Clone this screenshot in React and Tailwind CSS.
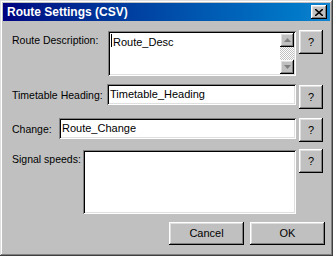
import React from 'react';

const raised =
  'bg-[#c0c0c0] shadow-[inset_-1px_-1px_#000,inset_1px_1px_#fff,inset_-2px_-2px_#808080,inset_2px_2px_#dfdfdf]';
const sunken =
  'bg-white shadow-[inset_1px_1px_#808080,inset_-1px_-1px_#fff,inset_2px_2px_#000,inset_-2px_-2px_#dfdfdf]';

function HelpButton({ className = '' }) {
  return (
    <div className={`w-[24px] h-[24px] shrink-0 flex items-center justify-center text-[11px] text-black ${raised} ${className}`}>
      ?
    </div>
  );
}

function Arrow({ up }) {
  return (
    <div className={`w-[14px] h-[14px] flex items-center justify-center ${raised}`}>
      <svg width="7" height="4" viewBox="0 0 7 4">
        {up ? (
          <path d="M3.5 0 L7 4 L0 4 Z" fill="#808080" />
        ) : (
          <path d="M0 0 L7 0 L3.5 4 Z" fill="#808080" />
        )}
      </svg>
    </div>
  );
}

function Field({ value }) {
  return (
    <div className={`flex-1 h-[21px] flex items-center pl-[3px] text-[11px] text-black ${sunken}`}>
      {value}
    </div>
  );
}

export default function App() {
  return (
    <div
      className="w-[333px] h-[256px] bg-[#c0c0c0] p-[2px] flex flex-col shadow-[inset_-1px_-1px_#404040,inset_1px_1px_#dfdfdf,inset_-2px_-2px_#808080,inset_2px_2px_#fff] overflow-hidden"
      style={{ fontFamily: '"Liberation Sans", Arial, sans-serif' }}
    >
      <div className="h-[18px] mx-[1px] mt-[1px] bg-gradient-to-r from-[#000080] to-[#1084d0] flex items-center justify-between pl-[4px] pr-[3px]">
        <span className="text-white font-bold text-[12px] leading-none">Route Settings (CSV)</span>
        <div className={`w-[16px] h-[14px] flex items-center justify-center ${raised}`}>
          <svg width="8" height="7" viewBox="0 0 8 7">
            <path d="M0 0 L8 7 M8 0 L0 7" stroke="#000" strokeWidth="1.6" />
          </svg>
        </div>
      </div>

      <div className="flex flex-col pl-[10px] pr-[8px] pt-[10px] text-[10.5px] text-black">
        {/* Route Description */}
        <div className="flex items-start">
          <span className="w-[96px] pt-[2px] shrink-0 whitespace-nowrap">Route Description:</span>
          <div className={`flex-1 h-[45px] flex p-[2px] ${sunken}`}>
            <div className="flex-1 flex items-start pl-[1px] pt-[1px] text-[11px]">
              <span className="w-[1px] h-[13px] bg-black mr-[1px]" />
              Route_Desc
            </div>
            <div className="w-[14px] flex flex-col bg-[repeating-conic-gradient(#c0c0c0_0_25%,#fff_0_50%)] bg-[length:2px_2px]">
              <Arrow up />
              <div className="flex-1" />
              <Arrow />
            </div>
          </div>
          <HelpButton className="ml-[3px] -mt-[1px]" />
        </div>

        {/* Timetable Heading */}
        <div className="flex items-start mt-[8px]">
          <span className="w-[95px] shrink-0 pt-[4px] whitespace-nowrap">Timetable Heading:</span>
          <Field value="Timetable_Heading" />
          <HelpButton className="ml-[3px] mt-[1px]" />
        </div>

        {/* Change */}
        <div className="flex items-start mt-[9px]">
          <span className="w-[47px] shrink-0 pt-[4px] whitespace-nowrap">Change:</span>
          <Field value="Route_Change" />
          <HelpButton className="ml-[3px]" />
        </div>

        {/* Signal speeds */}
        <div className="flex items-start mt-[8px]">
          <span className="w-[71px] shrink-0 pt-[2px] whitespace-nowrap">Signal speeds:</span>
          <div className={`flex-1 h-[64px] ${sunken}`} />
          <HelpButton className="ml-[3px] -mt-[1px]" />
        </div>

        <div className="flex justify-end gap-[6px] mt-[8px] -mr-[2px] text-[11px]">
          <div className={`w-[75px] h-[23px] flex items-center justify-center ${raised}`}>Cancel</div>
          <div className={`w-[75px] h-[23px] flex items-center justify-center ${raised}`}>OK</div>
        </div>
      </div>
    </div>
  );
}
